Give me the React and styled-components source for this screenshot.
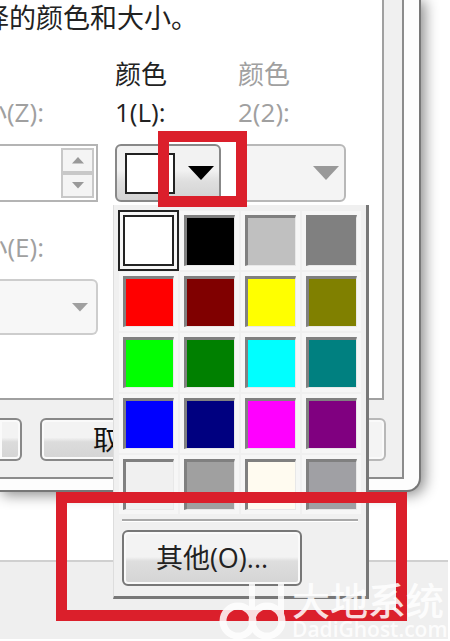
import styled, { createGlobalStyle } from "styled-components"
import { useState } from "react"

const swatches = [
  ["白色", "#ffffff"], ["黑色", "#000000"], ["银色", "#c0c0c0"], ["灰色", "#808080"],
  ["红色", "#ff0000"], ["深红", "#800000"], ["黄色", "#ffff00"], ["橄榄色", "#808000"],
  ["绿色", "#00ff00"], ["深绿", "#008000"], ["青色", "#00ffff"], ["深青", "#008080"],
  ["蓝色", "#0000ff"], ["深蓝", "#000080"], ["洋红", "#ff00ff"], ["紫色", "#800080"],
  ["浅灰", "#f0f0f0"], ["中灰", "#a0a0a0"], ["象牙白", "#fffbf0"], ["蓝灰", "#a0a0a4"],
]

const Arrow = ({ up, size, color }) => (
  <Triangle viewBox="0 0 26 14" $size={size} fill={color} aria-hidden="true">
    <path d={up ? "M13 0L26 14H0Z" : "M0 0H26L13 14Z"} />
  </Triangle>
)

export default function App() {
  const [color, setColor] = useState("#ffffff")
  const [size, setSize] = useState("")
  return (
    <Screen>
      <GlobalStyle />
      <Dialog>
        <Frame>
          <Page>
            <Intro>选择的颜色和大小。</Intro>
            <Fields>
              <Field>
                <Label htmlFor="size" $disabled $end>大小(Z):</Label>
                <Spinner>
                  <input id="size" value={size} disabled onChange={(e) => setSize(e.target.value)} />
                  <Steps>
                    <button type="button" disabled aria-label="增加"><Arrow up size={12} color="#999" /></button>
                    <button type="button" disabled aria-label="减少"><Arrow size={12} color="#999" /></button>
                  </Steps>
                </Spinner>
              </Field>
              <Field>
                <Label htmlFor="color1">颜色<br />1(L):</Label>
                <ColorButton id="color1" type="button" aria-haspopup="true">
                  <Chip $color={color} />
                  <Arrow size={26} color="#000" />
                </ColorButton>
                <Menu>
                  <Grid>
                    {swatches.map(([name, value]) => (
                      <Swatch
                        key={value}
                        type="button"
                        aria-label={name}
                        $color={value}
                        $selected={value === color}
                        onClick={() => setColor(value)}
                      />
                    ))}
                  </Grid>
                  <Divider />
                  <OtherButton type="button">其他(O)...</OtherButton>
                </Menu>
                <Mark $top={131} $left={158} $width={89} $height={76} />
              </Field>
              <Field>
                <Label htmlFor="color2" $disabled>颜色<br />2(2):</Label>
                <ColorButton id="color2" type="button" disabled>
                  <Arrow size={26} color="#999" />
                </ColorButton>
              </Field>
              <Field>
                <Label htmlFor="fontSize" $disabled $end>大小(E):</Label>
                <Combo>
                  <select id="fontSize" disabled />
                  <Arrow size={16} color="#a0a0a0" />
                </Combo>
              </Field>
            </Fields>
          </Page>
          <Footer>
            <DialogButton type="button" $width={22} $open aria-label="确定" />
            <DialogButton type="button" $width={160}>取消</DialogButton>
            <DialogButton type="button" $width={120} disabled aria-label="应用" />
          </Footer>
        </Frame>
      </Dialog>
      <Panel />
      <Mark $top={492} $left={56} $width={351} $height={129} />
      <Watermark>
        <svg width="68" height="60" viewBox="0 0 68 60" fill="none" stroke="#fff" strokeWidth="7" aria-hidden="true">
          <circle cx="20" cy="40" r="15" />
          <circle cx="49" cy="40" r="15" />
          <path d="M34 3V40M63 3V40" strokeWidth="6" />
        </svg>
        <div>
          <strong>大地系统</strong>
          <span>DadiGhost.com</span>
        </div>
      </Watermark>
    </Screen>
  )
}

const GlobalStyle = createGlobalStyle`
  *{
    box-sizing: border-box;
  }
  body{
    margin: 0;
    background: #fff;
  }
  body, button, input, select{
    font-family: "Open Sans", "Noto Sans CJK SC", sans-serif;
    font-size: 27px;
  }
`

const Screen = styled.main`
  position: relative;
  display: flex;
  flex-direction: column;
  min-height: 100vh;
  overflow: hidden;
`

const Dialog = styled.section`
  margin-right: 29px;
  padding: 0 15px 11px 0;
  background: #fdfdfd;
  border: solid #777;
  border-width: 0 2px 2px 0;
  border-bottom-right-radius: 14px;
  box-shadow: 3px 2px 14px 1px rgba(0, 0, 0, 0.45);
`

const Frame = styled.div`
  background: #f0f0f0;
  border: solid #8c8c8c;
  border-width: 0 2px 2px 0;
`

const Page = styled.div`
  margin-right: 18px;
  padding-bottom: 63px;
  background: #fff;
  border: solid #a0a0a0;
  border-width: 0 2px 2px 0;
`

const Intro = styled.p`
  display: flex;
  justify-content: flex-end;
  width: 198px;
  margin: 0;
  line-height: 36px;
  white-space: nowrap;
  color: #222;
`

const Fields = styled.div`
  display: grid;
  grid-template-columns: 98px 106px 108px;
  gap: 26px 17px;
  align-items: end;
  padding-top: 19px;
`

const Field = styled.div`
  display: flex;
  flex-direction: column;
  gap: 13px;
`

const Label = styled.label`
  display: flex;
  flex-direction: column;
  align-items: ${(p) => (p.$end ? "flex-end" : "flex-start")};
  padding-right: ${(p) => (p.$end ? "54px" : "0")};
  font-size: 26px;
  line-height: 38px;
  white-space: nowrap;
  color: ${(p) => (p.$disabled ? "#a0a0a0" : "#222")};
`

const Triangle = styled.svg`
  flex: none;
  width: ${(p) => p.$size}px;
`

const Spinner = styled.div`
  display: flex;
  height: 58px;
  padding: 2px;
  background: #fff;
  border: 2px solid #b4b4b4;
  border-left: 0;
  input{
    flex: 1;
    min-width: 0;
    padding: 0;
    border: 0;
    background: none;
  }
`

const Steps = styled.div`
  display: flex;
  flex-direction: column;
  width: 33px;
  button{
    display: flex;
    flex: 1;
    align-items: center;
    justify-content: center;
    padding: 0;
    background: #f4f4f4;
    border: 2px solid #c8c8c8;
  }
`

const ColorButton = styled.button`
  display: flex;
  align-items: center;
  justify-content: flex-end;
  gap: 13px;
  height: 58px;
  padding: 0 5px;
  background: linear-gradient(#f2f2f2 45%, #dfdfdf 65%, #d2d2d2);
  border: 2px solid #888;
  border-radius: 6px;
  &:disabled{
    background: #f4f4f4;
    border-color: #b8b8b8;
  }
`

const Chip = styled.span`
  width: 50px;
  height: 41px;
  background: ${(p) => p.$color};
  border: 2px solid #222;
`

const Combo = styled.div`
  position: relative;
  display: flex;
  select{
    flex: 1;
    height: 56px;
    appearance: none;
    background: #f4f4f4;
    border: 2px solid #b8b8b8;
    border-left: 0;
    border-radius: 0 6px 6px 0;
  }
  svg{
    position: absolute;
    top: 24px;
    right: 10px;
  }
`

const Menu = styled.div`
  position: absolute;
  z-index: 1;
  top: 205px;
  left: 113px;
  width: 256px;
  padding: 10px 8px;
  background: #f0f0f0;
  border: solid #777;
  border-width: 0 3px 3px 0;
  border-left: 1px solid #ddd;
`

const Grid = styled.div`
  display: grid;
  grid-template-columns: repeat(4, 51px);
  gap: 10px;
  padding-left: 1px;
`

const Swatch = styled.button`
  height: 51px;
  padding: 0;
  background: ${(p) => p.$color};
  border: solid;
  border-width: 3px 1px 1px 3px;
  border-color: #808080 #e8e8e8 #e8e8e8 #808080;
  box-shadow: 0 0 0 4px #f6f6f6;
  ${(p) => p.$selected && `
    border: 2px solid #222;
    outline: 2px solid #222;
    outline-offset: 3px;
  `}
`

const Divider = styled.hr`
  width: 236px;
  margin: 9px 0 8px;
  border: 0;
  border-top: 2px solid #a8a8a8;
  border-bottom: 1px solid #fff;
`

const OtherButton = styled.button`
  display: block;
  width: 180px;
  height: 56px;
  padding: 0;
  line-height: 48px;
  color: #222;
  background: linear-gradient(#f3f3f3 48%, #dedede 56%, #d4d4d4);
  border: 2px solid #777;
  border-radius: 6px;
  box-shadow: inset 0 0 0 2px #fafafa;
`

const Footer = styled.div`
  display: flex;
  gap: 18px;
  padding: 18px 16px 16px 0;
`

const DialogButton = styled.button`
  flex: none;
  width: ${(p) => p.$width}px;
  height: 43px;
  padding: 0;
  line-height: 36px;
  color: #111;
  background: linear-gradient(#f3f3f3 45%, #dcdcdc 56%, #d4d4d4);
  border: 2px solid #888;
  border-left-width: ${(p) => (p.$open ? "0" : "2px")};
  border-radius: ${(p) => (p.$open ? "0 6px 6px 0" : "6px")};
  box-shadow: inset 0 0 0 2px #fafafa;
  &:disabled{
    background: #f4f4f4;
    border-color: #b8b8b8;
  }
  &:last-child{
    flex: 1;
  }
`

const Panel = styled.div`
  flex: 1;
  margin: 68px 2px 2px 0;
  background: #efefef;
  border-top: 2px solid #d0d0d0;
`

// red call-out boxes drawn over the dialog
const Mark = styled.div`
  position: absolute;
  z-index: 2;
  top: ${(p) => p.$top}px;
  left: ${(p) => p.$left}px;
  width: ${(p) => p.$width}px;
  height: ${(p) => p.$height}px;
  border: 11px solid #db1f2b;
  pointer-events: none;
`

const Watermark = styled.div`
  position: absolute;
  z-index: 3;
  right: 0;
  bottom: 0;
  display: flex;
  align-items: flex-end;
  gap: 6px;
  opacity: 0.85;
  color: #fff;
  pointer-events: none;
  div{
    display: flex;
    flex-direction: column;
    width: 158px;
  }
  strong{
    font-size: 38px;
    font-weight: 500;
    line-height: 34px;
    white-space: nowrap;
  }
  span{
    font-size: 21px;
    font-weight: 600;
    line-height: 24px;
    white-space: nowrap;
  }
`
